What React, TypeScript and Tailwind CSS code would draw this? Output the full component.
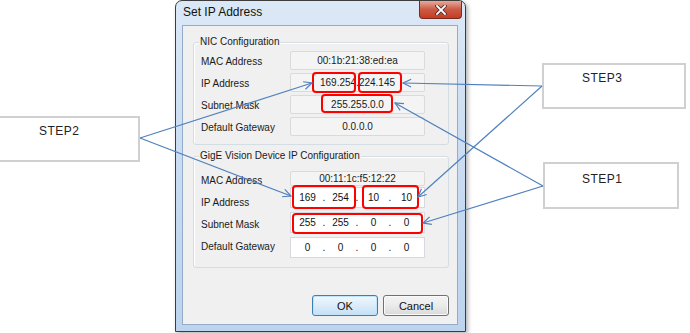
import React from "react";

type Pt = [number, number];

const arrows: { s: Pt; t: Pt }[] = [
  { s: [140, 138], t: [312, 83] },
  { s: [140, 138], t: [291, 196] },
  { s: [542, 86], t: [403, 83] },
  { s: [542, 86], t: [418, 197] },
  { s: [543, 186], t: [395, 103] },
  { s: [543, 186], t: [423, 223] },
];

const redBoxes = [
  { x: 313, y: 73, w: 42, h: 19 },
  { x: 359, y: 73, w: 42, h: 19 },
  { x: 322, y: 95, w: 70, h: 17 },
  { x: 293, y: 186, w: 62, h: 22 },
  { x: 363, y: 186, w: 55, h: 22 },
  { x: 293, y: 214, w: 129, h: 19 },
];

function headPath(s: Pt, t: Pt) {
  const dx = t[0] - s[0];
  const dy = t[1] - s[1];
  const L = Math.hypot(dx, dy);
  const ux = dx / L;
  const uy = dy / L;
  const len = 9;
  const a = 0.45;
  const rot = (ang: number): Pt => [
    ux * Math.cos(ang) - uy * Math.sin(ang),
    ux * Math.sin(ang) + uy * Math.cos(ang),
  ];
  const r1 = rot(a);
  const r2 = rot(-a);
  const p1: Pt = [t[0] - len * r1[0], t[1] - len * r1[1]];
  const p2: Pt = [t[0] - len * r2[0], t[1] - len * r2[1]];
  return `M${p1[0]},${p1[1]} L${t[0]},${t[1]} L${p2[0]},${p2[1]}`;
}

function Label({ children }: { children: React.ReactNode }) {
  return (
    <div className="w-[96px] pl-[7px] text-[10px] leading-[12px] text-[#1a1a1a] whitespace-nowrap">
      {children}
    </div>
  );
}

function ReadOnly({ value }: { value: string }) {
  return (
    <div className="w-[135px] h-full bg-[#f4f4f4] border border-[#dadada] rounded-[2px] flex items-center justify-center text-[10px] leading-[12px] text-[#1a1a1a] whitespace-nowrap">
      {value}
    </div>
  );
}

function IpField({ parts }: { parts: string[] }) {
  return (
    <div className="w-[135px] h-full bg-white border border-[#d6d9dd] flex items-center pl-[2px] pt-[1px] text-[10px] leading-[12px] text-[#111]">
      {parts.map((p, i) => (
        <React.Fragment key={i}>
          <span className="w-[29px] text-center">{p}</span>
          {i < 3 && <span className="w-[4px] text-center">.</span>}
        </React.Fragment>
      ))}
    </div>
  );
}

function StepBox({ text }: { text: string }) {
  return (
    <span className="block text-[12px] leading-[14px] tracking-[0.5px] text-[#222]">{text}</span>
  );
}

export default function App() {
  return (
    <div className="relative w-[690px] h-[333px] bg-white overflow-hidden flex items-start font-['Liberation_Sans',Arial,sans-serif]">
      {/* STEP2 */}
      <div className="w-[140px] h-[46px] mt-[116px] shrink-0 border-2 border-l-0 border-[#d0d0d0] bg-white pl-[39px] pt-[6px]">
        <StepBox text="STEP2" />
      </div>

      {/* Dialog */}
      <div className="ml-[35px] w-[291px] h-[332px] shrink-0 rounded-t-[7px] border border-[#3d3d3d] bg-gradient-to-b from-[#dbe8f6] via-[#c9dcf2] to-[#bcd4ee] shadow-[2px_2px_4px_rgba(0,0,0,0.3)] flex flex-col">
        <div className="h-[24px] flex items-start">
          <span className="ml-[7px] mt-[4px] text-[12px] leading-[14px] text-[#111]">Set IP Address</span>
          <div className="ml-auto mr-[3px] w-[43px] h-[18px] rounded-b-[4px] border border-t-0 border-[#7a2a20] bg-gradient-to-b from-[#e9a99b] via-[#c95a45] to-[#c83a1e] flex items-center justify-center">
            <svg width="12" height="10" viewBox="0 0 12 10">
              <path d="M2,1 L10,9 M10,1 L2,9" stroke="#4a2a25" strokeWidth="3.4" strokeLinecap="square" />
              <path d="M2,1 L10,9 M10,1 L2,9" stroke="#ffffff" strokeWidth="1.8" strokeLinecap="square" />
            </svg>
          </div>
        </div>

        <div className="ml-[6px] mr-[7px] mb-[6px] flex-1 bg-[#f0f0f0] border border-[#93acc9] flex flex-col">
          {/* NIC group */}
          <div className="mt-[16px] ml-[10px] mr-[8px] border border-[#d5dde4] rounded-[3px] flex flex-col pb-[8px] shadow-[inset_1px_1px_0_#ffffff]">
            <div className="-mt-[7px] ml-[5px] self-start px-[1px] bg-[#f0f0f0] text-[10px] leading-[12px] text-[#1a1a1a]">
              NIC Configuration
            </div>
            <div className="mt-[3px] flex flex-col gap-[3px]">
              <div className="flex h-[19px]">
                <Label>
                  <span className="block pt-[5px]">MAC Address</span>
                </Label>
                <ReadOnly value="00:1b:21:38:ed:ea" />
              </div>
              <div className="flex h-[19px]">
                <Label>
                  <span className="block pt-[5px]">IP Address</span>
                </Label>
                <ReadOnly value="169.254.224.145" />
              </div>
              <div className="flex h-[19px]">
                <Label>
                  <span className="block pt-[5px]">Subnet Mask</span>
                </Label>
                <ReadOnly value="255.255.0.0" />
              </div>
              <div className="flex h-[19px]">
                <Label>
                  <span className="block pt-[5px]">Default Gateway</span>
                </Label>
                <ReadOnly value="0.0.0.0" />
              </div>
            </div>
          </div>

          {/* GigE group */}
          <div className="mt-[11px] ml-[10px] mr-[8px] border border-[#d5dde4] rounded-[3px] flex flex-col pb-[9px] shadow-[inset_1px_1px_0_#ffffff]">
            <div className="-mt-[7px] ml-[5px] self-start px-[1px] bg-[#f0f0f0] text-[10px] leading-[12px] text-[#1a1a1a] whitespace-nowrap">
              GigE Vision Device IP Configuration
            </div>
            <div className="mt-[9px] flex h-[15px]">
              <Label>
                <span className="block pt-[4px]">MAC Address</span>
              </Label>
              <ReadOnly value="00:11:1c:f5:12:22" />
            </div>
            <div className="mt-[1px] flex h-[21px]">
              <Label>
                <span className="block pt-[10px]">IP Address</span>
              </Label>
              <IpField parts={["169", "254", "10", "10"]} />
            </div>
            <div className="mt-[4px] flex h-[21px]">
              <Label>
                <span className="block pt-[7px]">Subnet Mask</span>
              </Label>
              <IpField parts={["255", "255", "0", "0"]} />
            </div>
            <div className="mt-[4px] flex h-[21px]">
              <Label>
                <span className="block pt-[4px]">Default Gateway</span>
              </Label>
              <IpField parts={["0", "0", "0", "0"]} />
            </div>
          </div>

          {/* Buttons */}
          <div className="mt-[27px] mr-[8px] flex justify-end gap-[5px]">
            <div className="w-[66px] h-[21px] rounded-[3px] border border-[#3c7fb1] bg-gradient-to-b from-[#f0f8fd] via-[#dcecf9] to-[#c4e0f5] shadow-[inset_0_0_0_1px_#bfe4fb] flex items-center justify-center text-[11px] leading-[12px] text-[#111]">
              OK
            </div>
            <div className="w-[66px] h-[21px] rounded-[3px] border border-[#707070] bg-gradient-to-b from-[#f4f4f4] via-[#ebebeb] to-[#d9d9d9] shadow-[inset_0_0_0_1px_#fafafa] flex items-center justify-center text-[11px] leading-[12px] text-[#111]">
              Cancel
            </div>
          </div>
        </div>
      </div>

      {/* Right column */}
      <div className="ml-[76px] flex flex-col shrink-0">
        <div className="mt-[63px] w-[144px] h-[46px] border-2 border-[#d0d0d0] bg-white pl-[38px] pt-[6px]">
          <StepBox text="STEP3" />
        </div>
        <div className="mt-[53px] ml-[1px] w-[136px] h-[47px] border-2 border-[#d0d0d0] bg-white pl-[37px] pt-[8px]">
          <StepBox text="STEP1" />
        </div>
      </div>

      {/* Annotation overlay */}
      <svg className="absolute inset-0 pointer-events-none" width="690" height="333" viewBox="0 0 690 333">
        {redBoxes.map((b, i) => (
          <rect key={i} x={b.x} y={b.y} width={b.w} height={b.h} rx="3" fill="none" stroke="#ff0000" strokeWidth="2" />
        ))}
        {arrows.map((a, i) => (
          <g key={i} stroke="#4f81bd" strokeWidth="1.2" fill="none">
            <line x1={a.s[0]} y1={a.s[1]} x2={a.t[0]} y2={a.t[1]} />
            <path d={headPath(a.s, a.t)} />
          </g>
        ))}
      </svg>
    </div>
  );
}
